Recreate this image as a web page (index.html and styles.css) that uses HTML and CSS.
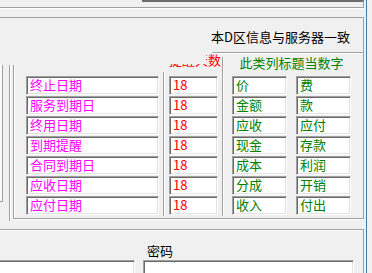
FILE: index.html
```html
<!DOCTYPE html>
<html lang="zh">
<head>
    <meta charset="UTF-8">
    <title>期限设置</title>
    <link rel="stylesheet" href="styles.css">
</head>
<body>
<div class="app">
    <div class="top">
        <div class="tab-edge"></div>
        <div class="rule"></div>
    </div>

    <div class="panel">
        <div class="title">
            <span>本D区信息与服务器一致</span>
        </div>
        <div class="title-rule"></div>
        <div class="body">
            <div class="side">
                <div class="btn-edge"></div>
                <div class="side-line"></div>
            </div>
            <div class="group">
                <div class="group-line"></div>

                <div class="col names">
                    <div class="col-head"></div>
                    <div class="field name">终止日期</div>
                    <div class="field name">服务到期日</div>
                    <div class="field name">终用日期</div>
                    <div class="field name">到期提醒</div>
                    <div class="field name">合同到期日</div>
                    <div class="field name">应收日期</div>
                    <div class="field name">应付日期</div>
                </div>

                <div class="sep sep-short"></div>

                <div class="col days">
                    <div class="col-head days-head">
                        <span>提醒天数</span>
                        <div class="head-cover"></div>
                    </div>
                    <div class="field day">18</div>
                    <div class="field day">18</div>
                    <div class="field day">18</div>
                    <div class="field day">18</div>
                    <div class="field day">18</div>
                    <div class="field day">18</div>
                    <div class="field day">18</div>
                </div>

                <div class="sep sep-tall"></div>

                <div class="col cats">
                    <div class="col-head cats-head">此类列标题当数字</div>
                    <div class="cat-grid">
                        <div class="field cat">价</div>
                        <div class="field cat">费</div>
                        <div class="field cat">金额</div>
                        <div class="field cat">款</div>
                        <div class="field cat">应收</div>
                        <div class="field cat">应付</div>
                        <div class="field cat">现金</div>
                        <div class="field cat">存款</div>
                        <div class="field cat">成本</div>
                        <div class="field cat">利润</div>
                        <div class="field cat">分成</div>
                        <div class="field cat">开销</div>
                        <div class="field cat">收入</div>
                        <div class="field cat">付出</div>
                    </div>
                </div>
            </div>
        </div>
    </div>

    <div class="lower">
        <div class="pwd-label">密码</div>
        <div class="pwd-row">
            <div class="field user"></div>
            <div class="field pwd"></div>
        </div>
    </div>

    <div class="blue-edge"></div>
</div>
</body>
</html>
```

FILE: styles.css
```css
body {
    margin: 0;
    background: #f0f0f0;
    font-family: "Noto Sans CJK SC", "Liberation Sans", sans-serif;
    font-size: 13px;
    color: #000;
}
.app {
    position: relative;
    width: 372px;
    height: 273px;
    overflow: hidden;
}

/* top strip */
.top {
    height: 17px;
}
.tab-edge {
    margin-left: 142px;
    width: 222px;
    height: 7px;
    box-sizing: border-box;
    border-top: 2px solid #6d6d6d;
    border-right: 1px solid #a0a0a0;
}
.rule {
    width: 364px;
    height: 1px;
    background: #a0a0a0;
    box-shadow: 0 1px 0 #fff;
}

/* upper panel */
.panel {
    width: 364px;
    box-sizing: border-box;
    border-top: 1px solid #a0a0a0;
    border-right: 1px solid #a0a0a0;
}
.title {
    display: flex;
    justify-content: flex-end;
    height: 34px;
    box-sizing: border-box;
    padding: 11px 13px 0 0;
    line-height: 15px;
    white-space: nowrap;
}
.title-rule {
    margin-left: 212px;
    height: 1px;
    background: #a0a0a0;
    box-shadow: 0 1px 0 #fff;
}
.body {
    display: flex;
    margin-top: 1px;
    height: 165px;
}
.side {
    display: flex;
    width: 13px;
    padding-top: 11px;
    box-sizing: border-box;
}
.btn-edge {
    width: 3px;
    height: 137px;
    box-sizing: border-box;
    border-right: 1px solid #a0a0a0;
    border-bottom: 1px solid #a0a0a0;
    background: #fafafa;
}
.side-line {
    margin-left: 6px;
    width: 1px;
    height: 156px;
    background: #a0a0a0;
    box-shadow: 1px 0 0 #fff;
}
.group {
    flex: 1;
    display: flex;
    border-bottom: 1px solid #a0a0a0;
    box-shadow: 0 1px 0 #fff;
}
.group-line {
    margin-top: 11px;
    width: 1px;
    background: #a0a0a0;
    box-shadow: 1px 0 0 #fff;
}
.col {
    display: flex;
    flex-direction: column;
}
.col-head {
    height: 22px;
    line-height: 15px;
}
.names {
    margin-left: 12px;
    width: 133px;
}
.days {
    margin-left: 5px;
    width: 49px;
}
.cats {
    margin-left: 9px;
    width: 119px;
}
.sep {
    width: 1px;
    margin-left: 4px;
    margin-bottom: 2px;
    background: #a0a0a0;
    box-shadow: 1px 0 0 #fff;
}
.sep-short { margin-top: 18px; }
.sep-tall { margin-top: 3px; }

.days-head {
    position: relative;
    color: #f00;
    white-space: nowrap;
}
.days-head span {
    display: block;
    margin-top: -2px;
    margin-right: -3px;
    text-align: right;
}
.head-cover {
    position: absolute;
    left: -2px;
    top: 0;
    width: 39px;
    height: 10px;
    background: #f0f0f0;
}
.cats-head {
    color: #008000;
    text-align: center;
    padding-top: 1px;
    box-sizing: border-box;
    white-space: nowrap;
}
.cat-grid {
    display: grid;
    grid-template-columns: 55px 55px;
    column-gap: 9px;
}

/* sunken edit box */
.field {
    height: 19px;
    margin-bottom: 1px;
    box-sizing: border-box;
    border-top: 1px solid #a0a0a0;
    border-left: 1px solid #a0a0a0;
    border-right: 1px solid #fff;
    border-bottom: 1px solid #fff;
    box-shadow: inset 1px 1px 0 #696969, inset -1px -1px 0 #e3e3e3;
    background: #fff;
    padding-left: 3px;
    line-height: 16px;
    white-space: nowrap;
    overflow: hidden;
}
.name { color: #f0f; }
.day { color: #f00; }
.cat { color: #008000; }

/* lower panel */
.lower {
    margin-top: 10px;
    width: 364px;
    height: 50px;
    box-sizing: border-box;
    border-top: 1px solid #a0a0a0;
    border-right: 1px solid #a0a0a0;
    box-shadow: inset 0 1px 0 #fff;
}
.pwd-label {
    margin-left: 147px;
    padding-top: 13px;
    height: 30px;
    box-sizing: border-box;
    line-height: 15px;
}
.pwd-row {
    display: flex;
}
.user {
    margin-left: -2px;
    width: 137px;
    height: 30px;
}
.pwd {
    margin-left: 8px;
    width: 211px;
    height: 30px;
}

.blue-edge {
    position: absolute;
    left: 366px;
    top: 0;
    width: 1px;
    height: 273px;
    background: #3c7fb1;
}
```
